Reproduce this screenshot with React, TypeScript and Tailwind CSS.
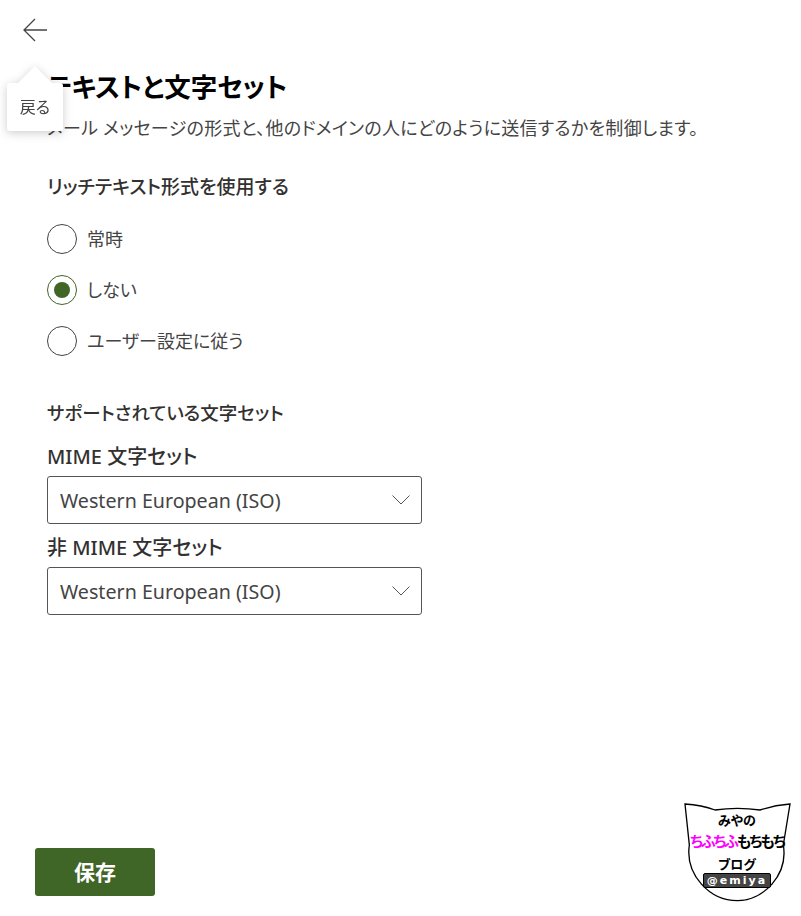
const font = "[font-family:'Noto_Sans','Noto_Sans_CJK_JP',sans-serif] [font-feature-settings:'palt']";

function BackArrow() {
    return (
        <svg width="26" height="24" viewBox="0 0 26 24" fill="none" stroke="#444444" strokeWidth="1.3">
            <path d="M25 12H2M13 1L2 12l11 11" />
        </svg>
    );
}

function Radio({ label, checked }: { label: string; checked?: boolean }) {
    return (
        <label className="flex h-[30px] items-center gap-[10px]">
            <span
                className={`flex h-[30px] w-[30px] items-center justify-center rounded-full border bg-white ${
                    checked ? 'border-[#3f6527]' : 'border-[#444444]'
                }`}
            >
                {checked && <span className="h-[16px] w-[16px] rounded-full bg-[#3f6527]" />}
            </span>
            <span className="text-[18px] leading-[30px] text-[#444444]">{label}</span>
        </label>
    );
}

function Select({ label, value }: { label: string; value: string }) {
    return (
        <div>
            <div className="h-[33px] text-[20px] leading-[28px] font-medium text-[#323130]">{label}</div>
            <div className="flex h-[48px] w-[375px] items-center justify-between rounded-[3px] border border-[#555555] pr-[11px] pl-[12px]">
                <span className="pt-[2px] text-[19.65px] text-[#444444]">{value}</span>
                <svg width="18" height="10" viewBox="0 0 18 10" fill="none" stroke="#555555" strokeWidth="1">
                    <path d="M0.5 0.5L9 9l8.5-8.5" />
                </svg>
            </div>
        </div>
    );
}

function Logo() {
    return (
        <div className="absolute top-[790px] left-[660px] h-[126px] w-[141px]">
            <svg width="141" height="126" viewBox="0 0 423 378" fill="none" stroke="#000000" strokeWidth="4">
                <path d="M75 42Q125 45 165 60Q232 50 300 60Q345 45 390 42L370 165C385 255 310 332 232 332C150 332 75 255 88 165Z" />
            </svg>
            <div className="absolute inset-0 flex flex-col items-center text-[14px] leading-none font-bold text-black">
                <span className="mt-[24px] ml-[13px] text-[13px]">みやの</span>
                <span className="mt-[7px] ml-[13px] text-[15px] tracking-[-2px]">
                    <span className="text-[#ff00ff]">ちふちふ</span>もちもち
                </span>
                <span className="mt-[9px] ml-[13px] text-[13px]">ブログ</span>
                <span className="mt-[2px] ml-[13px] rounded-[2px] border border-black bg-[#444444] px-[3px] text-[11px] leading-[13px] tracking-[2px] text-white [font-family:'DejaVu_Sans',sans-serif]">
                    @emiya
                </span>
            </div>
        </div>
    );
}

export default function App() {
    return (
        <main className={`relative flex h-[916px] flex-col bg-white ${font}`}>
            <button className="mt-[18px] ml-[22px] h-[24px] w-[26px]">
                <BackArrow />
            </button>

            <section className="mt-[24px] flex flex-1 flex-col pl-[47px]">
                <h1 className="h-[42px] text-[26.5px] leading-[42px] font-semibold text-black">テキストと文字セット</h1>
                <p className="h-[36px] pt-[3px] text-[18px] leading-[34px] tracking-[0.28px] text-[#444444]">
                    メール メッセージの形式と、他のドメインの人にどのように送信するかを制御します。
                </p>

                <h2 className="mt-[28px] h-[30px] text-[19px] leading-[30px] font-medium text-[#323130]">
                    リッチテキスト形式を使用する
                </h2>
                <div className="mt-[22px] flex flex-col gap-[21px]">
                    <Radio label="常時" />
                    <Radio label="しない" checked />
                    <Radio label="ユーザー設定に従う" />
                </div>

                <h2 className="mt-[42px] h-[30px] text-[18.5px] leading-[30px] font-medium text-[#323130]">
                    サポートされている文字セット
                </h2>
                <div className="mt-[15px] flex flex-col gap-[10px]">
                    <Select label="MIME 文字セット" value="Western European (ISO)" />
                    <Select label="非 MIME 文字セット" value="Western European (ISO)" />
                </div>
            </section>

            <div className="pb-[20px] pl-[35px]">
                <button className="h-[48px] w-[120px] rounded-[3px] bg-[#3f6527] pt-[2px] text-[21px] font-bold text-white">
                    保存
                </button>
            </div>

            {/* tooltip over the title */}
            <div className="absolute top-[83px] left-[7px] flex h-[48px] w-[56px] items-center justify-center rounded-[3px] bg-white drop-shadow-[0_2px_5px_rgba(0,0,0,0.2)]">
                <span className="absolute top-[-17px] left-[11px] h-0 w-0 border-x-[17px] border-b-[17px] border-x-transparent border-b-white" />
                <span className="text-[16px] text-[#444444]">戻る</span>
            </div>

            <Logo />
        </main>
    );
}
